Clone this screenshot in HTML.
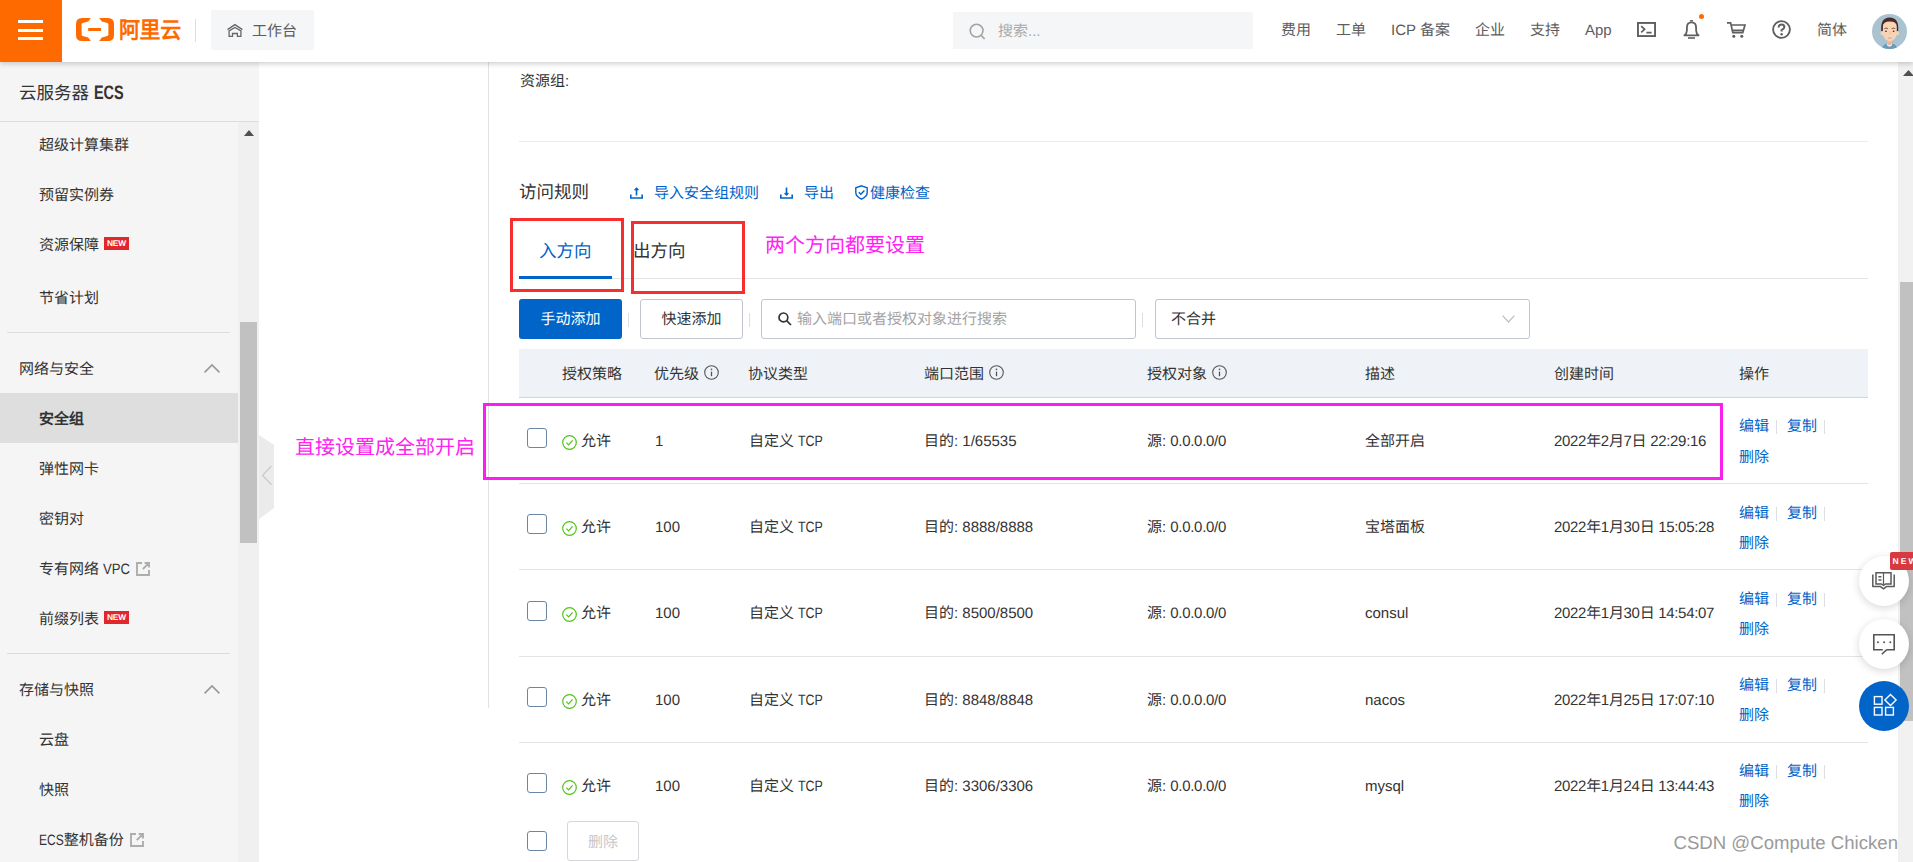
<!DOCTYPE html>
<html lang="zh-CN">
<head>
<meta charset="utf-8">
<title>云服务器 ECS - 安全组</title>
<style>
*{box-sizing:border-box;margin:0;padding:0}
html,body{width:1913px;height:862px;overflow:hidden;background:#fff}
body{font-family:"Liberation Sans",sans-serif;font-size:15px;color:#333;position:relative;line-height:20px;text-rendering:geometricPrecision}
.a{position:absolute;white-space:nowrap}
svg{display:block;overflow:visible}
/* header */
#hd{position:absolute;left:0;top:0;width:1913px;height:62px;background:#fff;box-shadow:0 2px 5px rgba(0,0,0,.18);z-index:20}
#menu{position:absolute;left:0;top:0;width:62px;height:62px;background:#ff6a00}
#menu i{position:absolute;left:18px;width:25px;height:3px;background:#fff}
.ht{position:absolute;top:21px;font-size:15px;line-height:20px;color:#5c5c5c;white-space:nowrap}
/* sidebar */
#sb{position:absolute;left:0;top:62px;width:259px;height:800px;background:#f5f5f5;z-index:5}
.mi{position:absolute;left:39px;margin-top:2px;font-size:15px;line-height:20px;color:#333;white-space:nowrap}
.mg{position:absolute;left:19px;margin-top:2px;font-size:15px;line-height:20px;color:#333;white-space:nowrap}
.new{position:absolute;left:104px;width:25px;height:13px;background:#e1262c;color:#fff;font-size:8.4px;line-height:13.5px;text-align:center;font-weight:bold;letter-spacing:-0.2px}
.hr{position:absolute;left:7px;width:223px;height:1px;background:#dcdcdc}
/* main */
.c{display:inline-block;white-space:nowrap;vertical-align:baseline}
.n{display:inline-block;transform-origin:0 50%}

.th{position:absolute;top:365px;font-size:15px;line-height:20px;color:#333;white-space:nowrap}
.td{position:absolute;margin-top:1px;font-size:15px;line-height:20px;color:#333;white-space:nowrap}
.rl{position:absolute;left:519px;width:1349px;height:1px;background:#e3e4e6}
.cb{position:absolute;left:527px;width:20px;height:20px;border:1px solid #6b85a6;border-radius:3px;background:#fff}
.sep{position:absolute;width:1px;height:14px;background:#dcdee3}
.lk{color:#0064c8}
.fab{position:absolute;left:1859px;width:50px;height:50px;border-radius:25px;background:#fff;box-shadow:0 2px 8px rgba(0,0,0,.16);z-index:30}
</style>
</head>
<body>

<!-- ================= HEADER ================= -->
<div id="hd">
  <div id="menu"><i style="top:20px"></i><i style="top:29px"></i><i style="top:37px"></i></div>
  <svg class="a" style="left:76px;top:18px" width="38" height="23" viewBox="0 0 38 23">
    <path fill="#ff6a00" d="M6 0H14.8L12.2 3.6L6.6 5Q5.6 5.4 5.6 6.4V16.6Q5.6 17.6 6.6 18L12.2 19.4L14.8 23H6Q0 23 0 17V6Q0 0 6 0Z"/>
    <path fill="#ff6a00" d="M32 0H23.2L25.8 3.6L31.4 5Q32.4 5.4 32.4 6.4V16.6Q32.4 17.6 31.4 18L25.8 19.4L23.2 23H32Q38 23 38 17V6Q38 0 32 0Z"/>
    <rect fill="#ff6a00" x="12.2" y="10" width="12.8" height="3"/>
  </svg>
  <div class="a" style="left:119px;top:16px;font-size:21px;line-height:28px;font-weight:bold;color:#ff6a00;letter-spacing:-0.4px;transform:scaleY(1.09);transform-origin:0 0">阿里云</div>
  <div class="a" style="left:195px;top:19px;width:1px;height:23px;background:#ddd"></div>
  <div class="a" style="left:211px;top:10px;width:103px;height:40px;background:#f5f6f7;border-radius:2px"></div>
  <svg class="a" style="left:227px;top:24px" width="16" height="13" viewBox="0 0 16 13" fill="none" stroke="#666" stroke-width="1.3">
    <path d="M0.5 5.6L7.9 0.6L15.4 5.6"/><path d="M2.1 12.3V6.9L7.9 3.5L13.9 6.9V12.3H10.4V9.5H5.5V12.3Z"/>
  </svg>
  <div class="ht" style="left:252px;top:22px">工作台</div>

  <div class="a" style="left:953px;top:12px;width:300px;height:37px;background:#f5f6f7"></div>
  <svg class="a" style="left:969px;top:23px" width="17" height="17" viewBox="0 0 17 17" fill="none" stroke="#a9a29c" stroke-width="1.6">
    <circle cx="7.6" cy="7.6" r="6.4"/><path d="M12.2 12.4L15.6 16"/>
  </svg>
  <div class="ht" style="left:998px;top:22px;color:#aaa">搜索...</div>

  <div class="ht" style="left:1281px">费用</div>
  <div class="ht" style="left:1336px">工单</div>
  <div class="ht" style="left:1391px">ICP 备案</div>
  <div class="ht" style="left:1475px">企业</div>
  <div class="ht" style="left:1530px">支持</div>
  <div class="ht" style="left:1585px">App</div>
  <!-- terminal -->
  <svg class="a" style="left:1637px;top:22px" width="19" height="15" viewBox="0 0 19 15" fill="none" stroke="#5f5f5f" stroke-width="1.9">
    <rect x="0.95" y="0.95" width="17.1" height="13.1"/><path d="M4.2 4.2L7.6 7.3L4.2 10.4M9.4 10.6H14.6" stroke-width="1.7"/>
  </svg>
  <!-- bell -->
  <svg class="a" style="left:1683px;top:20px" width="17" height="19" viewBox="0 0 17 19" fill="none" stroke="#5f5f5f" stroke-width="1.8">
    <path d="M6.9 0.8H10.1" stroke-width="1.4"/><path d="M1.4 15.4Q3.9 13.6 3.9 10.6V7.6Q3.9 2.4 8.5 2.4Q13.1 2.4 13.1 7.6V10.6Q13.1 13.6 15.6 15.4Z" stroke-linejoin="round"/><path d="M5 18H12" stroke-width="1.6"/>
  </svg>
  <div class="a" style="left:1698.7px;top:13.8px;width:5.4px;height:5.4px;border-radius:3px;background:#ff6a00"></div>
  <!-- cart -->
  <svg class="a" style="left:1727px;top:22px" width="19" height="16" viewBox="0 0 19 16" fill="none" stroke="#5f5f5f" stroke-width="1.7">
    <path d="M0 0.9H3.6L5.8 10.6H15.8L18 3H4.2M5.2 8.4H16.4"/><circle cx="6.8" cy="14.2" r="1.5" fill="#5f5f5f" stroke="none"/><circle cx="14.8" cy="14.2" r="1.5" fill="#5f5f5f" stroke="none"/>
  </svg>
  <!-- help -->
  <svg class="a" style="left:1772px;top:20px" width="19" height="19" viewBox="0 0 19 19" fill="none" stroke="#5f5f5f" stroke-width="1.9">
    <circle cx="9.5" cy="9.5" r="8.4"/><path d="M6.6 7.4Q6.6 4.6 9.5 4.6Q12.4 4.6 12.4 7.1Q12.4 8.6 9.6 10.2V11.4" stroke-width="2"/><circle cx="9.6" cy="14.2" r="1.2" fill="#5f5f5f" stroke="none"/>
  </svg>
  <div class="ht" style="left:1817px">简体</div>
  <!-- avatar -->
  <svg class="a" style="left:1872px;top:14px" width="35" height="35" viewBox="0 0 35 35">
    <defs><clipPath id="av"><circle cx="17.5" cy="17.5" r="17.5"/></clipPath></defs>
    <g clip-path="url(#av)">
      <rect width="35" height="35" fill="#a9c3d1"/>
      <path d="M9.6 36Q10.4 30.6 14.8 29.6H20.4Q24.8 30.6 25.6 36Z" fill="#6b9bbc"/>
      <path d="M14.6 29.4H20.4L19.8 31.6L17.5 32.8L15.2 31.6Z" fill="#fff"/>
      <path d="M15.3 25H19.7V30.6L17.5 31.8L15.3 30.6Z" fill="#eeb696"/>
      <path d="M9.2 17.4Q8 3.4 17.7 3.4Q27.4 3.4 26.2 17.4H24V10H11.4V17.4Z" fill="#4b2b2a"/>
      <ellipse cx="10" cy="19.2" rx="1.4" ry="2.1" fill="#f8d3b5"/><ellipse cx="25.6" cy="19.2" rx="1.4" ry="2.1" fill="#f8d3b5"/>
      <path d="M10.9 13Q10.9 7.6 17.8 7.6Q24.8 7.6 24.8 13V20Q24.8 23 21.8 25.8Q19.2 27.6 17.8 27.6Q16.4 27.6 13.9 25.8Q10.9 23 10.9 20Z" fill="#f8d3b5"/>
      <path d="M12.4 14.6Q14.2 13.6 16 14.6M19.6 14.6Q21.4 13.6 23.2 14.6" stroke="#5a3a32" stroke-width="0.8" fill="none"/>
      <ellipse cx="14" cy="17.3" rx="0.9" ry="0.7" fill="#3a2420"/><ellipse cx="21.6" cy="17.3" rx="0.9" ry="0.7" fill="#3a2420"/>
      <path d="M17.8 17.6Q18.6 20 17.6 20.8" stroke="#eeb696" stroke-width="0.7" fill="none"/>
      <path d="M15.8 24.2Q17.8 23.6 19.8 24.2" stroke="#d99a84" stroke-width="1" fill="none"/>
    </g>
  </svg>
</div>

<!-- ================= SIDEBAR ================= -->
<div id="sb">
  <div class="a" style="left:19px;top:19px;font-size:17.5px;line-height:24px;color:#333"><span class="c" style="width:74.9px">云服务器 </span><span class="n" style="transform:scaleX(.74);font-weight:bold;font-size:19.5px;line-height:20px">ECS</span></div>
  <div class="a" style="left:0;top:59px;width:259px;height:1px;background:#dcdcdc"></div>
  <!-- scrollbar -->
  <div class="a" style="left:238px;top:60px;width:21px;height:740px;background:#f0f0f0"></div>
  <div class="a" style="left:240px;top:260px;width:17px;height:221px;background:#c1c1c1"></div>
  <svg class="a" style="left:244px;top:68px" width="10" height="6" viewBox="0 0 10 6"><path d="M5 0L10 6H0Z" fill="#505050"/></svg>

  <div class="mi" style="top:72px">超级计算集群</div>
  <div class="mi" style="top:122px">预留实例券</div>
  <div class="mi" style="top:172px">资源保障</div><div class="new" style="top:175px">NEW</div>
  <div class="mi" style="top:225px">节省计划</div>
  <div class="hr" style="top:270px"></div>
  <div class="mg" style="top:296px">网络与安全</div>
  <svg class="a" style="left:204px;top:302px" width="16" height="9" viewBox="0 0 16 9" fill="none" stroke="#999" stroke-width="1.6"><path d="M0.6 8.4L8 1L15.4 8.4"/></svg>
  <div class="a" style="left:0;top:331px;width:238px;height:50px;background:#dedede"></div>
  <div class="mi" style="top:346px;font-weight:bold">安全组</div>
  <div class="mi" style="top:396px">弹性网卡</div>
  <div class="mi" style="top:446px">密钥对</div>
  <div class="mi" style="top:496px"><span class="c" style="width:64.2px">专有网络 </span><span class="n" style="transform:scaleX(.875)">VPC</span></div>
  <svg class="a" style="left:136px;top:500px" width="14" height="14" viewBox="0 0 14 14" fill="none" stroke="#adadad" stroke-width="1.9"><path d="M6 1H1V13H13V8M8.6 1H13V5.4M13 1L6.8 7.2"/></svg>
  <div class="mi" style="top:546px">前缀列表</div><div class="new" style="top:549px">NEW</div>
  <div class="hr" style="top:591px"></div>
  <div class="mg" style="top:617px">存储与快照</div>
  <svg class="a" style="left:204px;top:623px" width="16" height="9" viewBox="0 0 16 9" fill="none" stroke="#999" stroke-width="1.6"><path d="M0.6 8.4L8 1L15.4 8.4"/></svg>
  <div class="mi" style="top:667px">云盘</div>
  <div class="mi" style="top:717px">快照</div>
  <div class="mi" style="top:767px"><span class="n" style="transform:scaleX(.8);margin-right:-6.2px">ECS</span>整机备份</div>
  <svg class="a" style="left:130px;top:771px" width="14" height="14" viewBox="0 0 14 14" fill="none" stroke="#adadad" stroke-width="1.9"><path d="M6 1H1V13H13V8M8.6 1H13V5.4M13 1L6.8 7.2"/></svg>
</div>
<!-- collapse handle -->
<svg class="a" style="left:259px;top:435px;z-index:6" width="15" height="84" viewBox="0 0 15 84">
  <path d="M0 0L15 10V73L0 84Z" fill="#ebebeb"/><path d="M12.4 31L3.6 40.4L12.4 49.6" fill="none" stroke="#c8c8c8" stroke-width="1.3"/>
</svg>

<!-- MAIN-START -->
<div class="a" style="left:488px;top:62px;width:1px;height:646px;background:#e2e2e2"></div>
<div class="a" style="left:520px;top:72px;font-size:15px;line-height:20px;color:#333">资源组:</div>
<div class="a" style="left:519px;top:141px;width:1349px;height:1px;background:#ebebeb"></div>

<div class="a" style="left:519px;top:180px;font-size:17.5px;line-height:24px;color:#333">访问规则</div>
<svg class="a" style="left:630px;top:187px" width="13" height="12" viewBox="0 0 13 12" fill="none" stroke="#0064c8" stroke-width="1.6"><path d="M0.8 7.6V11H12.2V7.6M6.5 8.4V1.2" /><path d="M4.6 3.2L6.5 1.2L8.4 3.2" stroke-width="1.4"/></svg>
<div class="a lk" style="left:654px;top:184px">导入安全组规则</div>
<svg class="a" style="left:780px;top:187px" width="13" height="12" viewBox="0 0 13 12" fill="none" stroke="#0064c8" stroke-width="1.6"><path d="M0.8 7.6V11H12.2V7.6M6.5 0.6V7.8"/><path d="M4.6 6L6.5 8L8.4 6" stroke-width="1.4"/></svg>
<div class="a lk" style="left:804px;top:184px">导出</div>
<svg class="a" style="left:855px;top:185.4px" width="13" height="15" viewBox="0 0 13 15" fill="none" stroke="#0064c8" stroke-width="1.4"><path d="M6.5 0.8L12.2 2.8V7.6Q12.2 11.6 6.5 14.2Q0.8 11.6 0.8 7.6V2.8Z"/><path d="M3.8 7.2L5.8 9.2L9.4 5.4"/></svg>
<div class="a lk" style="left:870px;top:184px">健康检查</div>

<!-- tabs -->
<div class="a" style="left:519px;top:278px;width:1349px;height:1px;background:#e3e4e6"></div>
<div class="a" style="left:519px;top:276px;width:93px;height:3px;background:#0064c8"></div>
<div class="a lk" style="left:539px;top:239px;font-size:17.5px;line-height:24px">入方向</div>
<div class="a" style="left:633px;top:239px;font-size:17.5px;line-height:24px;color:#333">出方向</div>
<!-- annotations -->
<div class="a" style="left:510px;top:218px;width:114px;height:74px;border:3px solid #f82d2d"></div>
<div class="a" style="left:631px;top:221px;width:114px;height:73px;border:3px solid #f82d2d"></div>
<div class="a" style="left:765px;top:231.6px;font-size:20px;line-height:28px;color:#ff22f0">两个方向都要设置</div>
<div class="a" style="left:295px;top:433.6px;font-size:20px;line-height:28px;color:#ff22f0">直接设置成全部开启</div>
<div class="a" style="left:483px;top:403px;width:1240px;height:77px;border:3px solid #fa1ef0;z-index:3"></div>

<!-- toolbar -->
<div class="a" style="left:519px;top:299px;width:103px;height:40px;background:#0064c8;border-radius:3px;color:#fff;text-align:center;line-height:42px;font-size:15px">手动添加</div>
<div class="sep" style="left:628px;top:313px"></div>
<div class="a" style="left:640px;top:299px;width:103px;height:40px;background:#fff;border:1px solid #c0c6cc;border-radius:3px;color:#333;text-align:center;line-height:40px;font-size:15px">快速添加</div>
<div class="sep" style="left:749px;top:313px"></div>
<div class="a" style="left:761px;top:299px;width:375px;height:40px;background:#fff;border:1px solid #c0c6cc;border-radius:3px"></div>
<svg class="a" style="left:778px;top:312px" width="14" height="14" viewBox="0 0 14 14" fill="none" stroke="#333" stroke-width="1.7"><circle cx="5.4" cy="5.4" r="4.4"/><path d="M8.6 8.6L13 13"/></svg>
<div class="a" style="left:797px;top:310px;color:#a3a3a3">输入端口或者授权对象进行搜索</div>
<div class="sep" style="left:1142px;top:313px"></div>
<div class="a" style="left:1155px;top:299px;width:375px;height:40px;background:#fff;border:1px solid #c0c6cc;border-radius:3px"></div>
<div class="a" style="left:1171px;top:310px;color:#333">不合并</div>
<svg class="a" style="left:1502px;top:315px" width="13" height="8" viewBox="0 0 13 8" fill="none" stroke="#c1c1c1" stroke-width="1.3"><path d="M0.6 0.6L6.5 7L12.4 0.6"/></svg>

<!-- table header -->
<div class="a" style="left:519px;top:349px;width:1349px;height:49px;background:#eff3f8;border-bottom:1px solid #d2d6dc"></div>
<div class="th" style="left:562px">授权策略</div>
<div class="th" style="left:654px">优先级</div>
<div class="th" style="left:748px">协议类型</div>
<div class="th" style="left:924px">端口范围</div>
<div class="th" style="left:1147px">授权对象</div>
<div class="th" style="left:1365px">描述</div>
<div class="th" style="left:1554px">创建时间</div>
<div class="th" style="left:1739px">操作</div>
<svg class="a" style="left:704px;top:365px" width="15" height="15" viewBox="0 0 15 15" fill="none" stroke="#555" stroke-width="1.1"><circle cx="7.5" cy="7.5" r="6.8"/><path d="M7.5 6.6V11.2" stroke-width="1.3"/><circle cx="7.5" cy="4.4" r="0.8" fill="#555" stroke="none"/></svg>
<svg class="a" style="left:989px;top:365px" width="15" height="15" viewBox="0 0 15 15" fill="none" stroke="#555" stroke-width="1.1"><circle cx="7.5" cy="7.5" r="6.8"/><path d="M7.5 6.6V11.2" stroke-width="1.3"/><circle cx="7.5" cy="4.4" r="0.8" fill="#555" stroke="none"/></svg>
<svg class="a" style="left:1212px;top:365px" width="15" height="15" viewBox="0 0 15 15" fill="none" stroke="#555" stroke-width="1.1"><circle cx="7.5" cy="7.5" r="6.8"/><path d="M7.5 6.6V11.2" stroke-width="1.3"/><circle cx="7.5" cy="4.4" r="0.8" fill="#555" stroke="none"/></svg>
<!-- row 1 -->
<div class="cb" style="top:428px"></div>
<svg class="a" style="left:562px;top:435px" width="15" height="15" viewBox="0 0 15 15" fill="none" stroke="#52c41a" stroke-width="1.2"><circle cx="7.5" cy="7.5" r="6.8"/><path d="M4.4 7.6L6.6 9.8L10.6 5.4"/></svg>
<div class="td" style="left:581px;top:431px">允许</div>
<div class="td" style="left:655px;top:431px">1</div>
<div class="td" style="left:749px;top:431px"><span class="c" style="width:49.2px">自定义 </span><span class="n" style="transform:scaleX(.83)">TCP</span></div>
<div class="td" style="left:924px;top:431px"><span class="c" style="width:38.3px">目的: </span>1/65535</div>
<div class="td" style="left:1147px;top:431px"><span class="c" style="width:23.3px">源: </span><span style="letter-spacing:-.3px">0.0.0.0/0</span></div>
<div class="td" style="left:1365px;top:431px">全部开启</div>
<div class="td" style="left:1554px;top:431px;letter-spacing:-.31px">2022<span class="c" style="width:14.69px">年</span>2<span class="c" style="width:14.69px">月</span>7<span class="c" style="width:14.69px">日</span> 22:29:16</div>
<div class="td lk" style="left:1739px;top:416px">编辑</div><div class="sep" style="left:1776px;top:420px"></div><div class="td lk" style="left:1787px;top:416px">复制</div><div class="sep" style="left:1824px;top:420px"></div>
<div class="td lk" style="left:1739px;top:447px">删除</div>
<div class="rl" style="top:483px"></div>
<!-- row 2 -->
<div class="cb" style="top:514px"></div>
<svg class="a" style="left:562px;top:521px" width="15" height="15" viewBox="0 0 15 15" fill="none" stroke="#52c41a" stroke-width="1.2"><circle cx="7.5" cy="7.5" r="6.8"/><path d="M4.4 7.6L6.6 9.8L10.6 5.4"/></svg>
<div class="td" style="left:581px;top:517px">允许</div>
<div class="td" style="left:655px;top:517px">100</div>
<div class="td" style="left:749px;top:517px"><span class="c" style="width:49.2px">自定义 </span><span class="n" style="transform:scaleX(.83)">TCP</span></div>
<div class="td" style="left:924px;top:517px"><span class="c" style="width:38.3px">目的: </span>8888/8888</div>
<div class="td" style="left:1147px;top:517px"><span class="c" style="width:23.3px">源: </span><span style="letter-spacing:-.3px">0.0.0.0/0</span></div>
<div class="td" style="left:1365px;top:517px">宝塔面板</div>
<div class="td" style="left:1554px;top:517px;letter-spacing:-.31px">2022<span class="c" style="width:14.69px">年</span>1<span class="c" style="width:14.69px">月</span>30<span class="c" style="width:14.69px">日</span> 15:05:28</div>
<div class="td lk" style="left:1739px;top:503px">编辑</div><div class="sep" style="left:1776px;top:507px"></div><div class="td lk" style="left:1787px;top:503px">复制</div><div class="sep" style="left:1824px;top:507px"></div>
<div class="td lk" style="left:1739px;top:533px">删除</div>
<div class="rl" style="top:569px"></div>
<!-- row 3 -->
<div class="cb" style="top:601px"></div>
<svg class="a" style="left:562px;top:607px" width="15" height="15" viewBox="0 0 15 15" fill="none" stroke="#52c41a" stroke-width="1.2"><circle cx="7.5" cy="7.5" r="6.8"/><path d="M4.4 7.6L6.6 9.8L10.6 5.4"/></svg>
<div class="td" style="left:581px;top:603px">允许</div>
<div class="td" style="left:655px;top:603px">100</div>
<div class="td" style="left:749px;top:603px"><span class="c" style="width:49.2px">自定义 </span><span class="n" style="transform:scaleX(.83)">TCP</span></div>
<div class="td" style="left:924px;top:603px"><span class="c" style="width:38.3px">目的: </span>8500/8500</div>
<div class="td" style="left:1147px;top:603px"><span class="c" style="width:23.3px">源: </span><span style="letter-spacing:-.3px">0.0.0.0/0</span></div>
<div class="td" style="left:1365px;top:603px">consul</div>
<div class="td" style="left:1554px;top:603px;letter-spacing:-.31px">2022<span class="c" style="width:14.69px">年</span>1<span class="c" style="width:14.69px">月</span>30<span class="c" style="width:14.69px">日</span> 14:54:07</div>
<div class="td lk" style="left:1739px;top:589px">编辑</div><div class="sep" style="left:1776px;top:593px"></div><div class="td lk" style="left:1787px;top:589px">复制</div><div class="sep" style="left:1824px;top:593px"></div>
<div class="td lk" style="left:1739px;top:619px">删除</div>
<div class="rl" style="top:656px"></div>
<!-- row 4 -->
<div class="cb" style="top:687px"></div>
<svg class="a" style="left:562px;top:694px" width="15" height="15" viewBox="0 0 15 15" fill="none" stroke="#52c41a" stroke-width="1.2"><circle cx="7.5" cy="7.5" r="6.8"/><path d="M4.4 7.6L6.6 9.8L10.6 5.4"/></svg>
<div class="td" style="left:581px;top:690px">允许</div>
<div class="td" style="left:655px;top:690px">100</div>
<div class="td" style="left:749px;top:690px"><span class="c" style="width:49.2px">自定义 </span><span class="n" style="transform:scaleX(.83)">TCP</span></div>
<div class="td" style="left:924px;top:690px"><span class="c" style="width:38.3px">目的: </span>8848/8848</div>
<div class="td" style="left:1147px;top:690px"><span class="c" style="width:23.3px">源: </span><span style="letter-spacing:-.3px">0.0.0.0/0</span></div>
<div class="td" style="left:1365px;top:690px">nacos</div>
<div class="td" style="left:1554px;top:690px;letter-spacing:-.31px">2022<span class="c" style="width:14.69px">年</span>1<span class="c" style="width:14.69px">月</span>25<span class="c" style="width:14.69px">日</span> 17:07:10</div>
<div class="td lk" style="left:1739px;top:675px">编辑</div><div class="sep" style="left:1776px;top:679px"></div><div class="td lk" style="left:1787px;top:675px">复制</div><div class="sep" style="left:1824px;top:679px"></div>
<div class="td lk" style="left:1739px;top:705px">删除</div>
<div class="rl" style="top:742px"></div>
<!-- row 5 -->
<div class="cb" style="top:773px"></div>
<svg class="a" style="left:562px;top:780px" width="15" height="15" viewBox="0 0 15 15" fill="none" stroke="#52c41a" stroke-width="1.2"><circle cx="7.5" cy="7.5" r="6.8"/><path d="M4.4 7.6L6.6 9.8L10.6 5.4"/></svg>
<div class="td" style="left:581px;top:776px">允许</div>
<div class="td" style="left:655px;top:776px">100</div>
<div class="td" style="left:749px;top:776px"><span class="c" style="width:49.2px">自定义 </span><span class="n" style="transform:scaleX(.83)">TCP</span></div>
<div class="td" style="left:924px;top:776px"><span class="c" style="width:38.3px">目的: </span>3306/3306</div>
<div class="td" style="left:1147px;top:776px"><span class="c" style="width:23.3px">源: </span><span style="letter-spacing:-.3px">0.0.0.0/0</span></div>
<div class="td" style="left:1365px;top:776px">mysql</div>
<div class="td" style="left:1554px;top:776px;letter-spacing:-.31px">2022<span class="c" style="width:14.69px">年</span>1<span class="c" style="width:14.69px">月</span>24<span class="c" style="width:14.69px">日</span> 13:44:43</div>
<div class="td lk" style="left:1739px;top:761px">编辑</div><div class="sep" style="left:1776px;top:765px"></div><div class="td lk" style="left:1787px;top:761px">复制</div><div class="sep" style="left:1824px;top:765px"></div>
<div class="td lk" style="left:1739px;top:791px">删除</div>

<!-- footer -->
<div class="cb" style="top:831px"></div>
<div class="a" style="left:567px;top:821px;width:72px;height:40px;background:#fff;border:1px solid #d4d7dc;border-radius:3px;color:#c8c8c8;text-align:center;line-height:42px;font-size:15px">删除</div>

<!-- page scrollbar -->
<div class="a" style="left:1898px;top:62px;width:15px;height:800px;background:#f1f1f1"></div>
<div class="a" style="left:1900px;top:282px;width:13px;height:439px;background:#c1c1c1"></div>
<svg class="a" style="left:1903px;top:70px" width="10" height="6" viewBox="0 0 10 6"><path d="M5.5 0L11 6H0Z" fill="#505050"/></svg>

<!-- floating buttons -->
<div class="fab" style="top:556px"></div>
<svg class="a" style="left:1872px;top:572px;z-index:31" width="23" height="18" viewBox="0 0 23 18" fill="none" stroke="#5a5a5a" stroke-width="1.5"><path d="M0.8 2.6V14.6H8.6L11.5 16.8L14.4 14.6H22.2V2.6" stroke-linejoin="round"/><path d="M4 12V0.8H19V12H13.6L11.5 13.4L9.4 12Z"/><path d="M11.5 1V12.6" stroke-width="1.2"/><path d="M6.4 4.8H9.4M6.4 8H9.4" stroke-width="1.4"/></svg>
<div class="a" style="left:1890px;top:552px;width:23px;height:18px;background:#d63a40;color:#fff;font-size:8.5px;font-weight:bold;line-height:18px;letter-spacing:2.1px;padding-left:2.5px;overflow:hidden;z-index:32;border-radius:2px 0 0 2px">NEW</div>
<div class="fab" style="top:619px"></div>
<svg class="a" style="left:1872.5px;top:633.5px;z-index:31" width="22" height="21" viewBox="0 0 22 21" fill="none" stroke="#555" stroke-width="1.6"><path d="M13.6 15.8H21.2V0.8H0.8V15.8H9.8"/><path d="M13.8 15.6L8.8 20.2" stroke-width="1.5"/><circle cx="4.9" cy="8.2" r="1" fill="#555" stroke="none"/><circle cx="11.1" cy="8.2" r="1" fill="#555" stroke="none"/><circle cx="17.3" cy="8.2" r="1" fill="#555" stroke="none"/></svg>
<div class="fab" style="top:681px;background:#0064c8;box-shadow:none"></div>
<svg class="a" style="left:1872px;top:692px;z-index:31" width="25" height="24" viewBox="0 0 25 24" fill="none" stroke="#fff" stroke-width="1.4"><rect x="2.4" y="4.6" width="7.6" height="7.6"/><rect x="2.4" y="15.4" width="7.6" height="7.6"/><rect x="13.6" y="15.4" width="7.8" height="7.6"/><path d="M18.5 2.4L24.1 8L18.5 13.6L12.9 8Z"/></svg>

<!-- watermark -->
<div class="a" style="left:1673.5px;top:830.5px;font-size:18.6px;line-height:24px;color:#9a9a9a;z-index:25;text-shadow:0 0 1px #fff,0 0 2px #fff">CSDN @Compute Chicken</div>
<!-- MAIN-END -->

</body>
</html>
